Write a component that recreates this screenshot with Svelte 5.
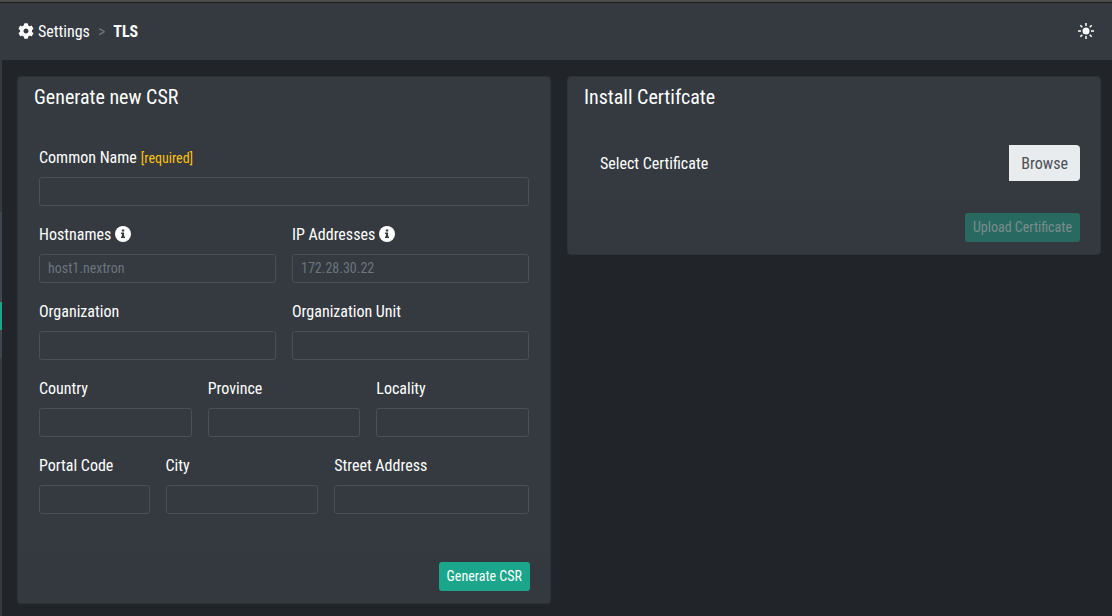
<script>
  const fields = [
    { id: 'common-name', label: 'Common Name', span: 12, required: true },
    { id: 'hostnames', label: 'Hostnames', span: 6, info: true, placeholder: 'host1.nextron' },
    { id: 'ip-addresses', label: 'IP Addresses', span: 6, info: true, placeholder: '172.28.30.22' },
    { id: 'organization', label: 'Organization', span: 6 },
    { id: 'organization-unit', label: 'Organization Unit', span: 6 },
    { id: 'country', label: 'Country', span: 4 },
    { id: 'province', label: 'Province', span: 4 },
    { id: 'locality', label: 'Locality', span: 4 },
    { id: 'postal-code', label: 'Portal Code', span: 3 },
    { id: 'city', label: 'City', span: 4 },
    { id: 'street', label: 'Street Address', span: 5 }
  ];
</script>

<div class="window-edge"></div>
<header>
  <nav>
    <a href="#settings">
      <svg viewBox="0 0 512 512" aria-hidden="true"><path fill="currentColor" d="M487.4 315.7l-42.6-24.600c4.300-23.200 4.300-47 0-70.200l42.600-24.600c4.900-2.800 7.100-8.600 5.500-14-11.100-35.600-30-67.800-54.700-94.600-3.800-4.100-10-5.100-14.800-2.300L380.800 110c-17.900-15.400-38.500-27.300-60.800-35.100V25.800c0-5.600-3.900-10.500-9.400-11.700-36.700-8.200-74.300-7.800-109.200 0-5.500 1.200-9.400 6.100-9.400 11.700V75c-22.200 7.900-42.800 19.800-60.800 35.100L88.700 85.500c-4.900-2.800-11-1.900-14.800 2.300-24.700 26.700-43.600 58.900-54.700 94.600-1.700 5.400.6 11.200 5.500 14L67.300 221c-4.300 23.200-4.300 47 0 70.200l-42.600 24.600c-4.900 2.800-7.100 8.600-5.500 14 11.100 35.600 30 67.800 54.700 94.600 3.800 4.100 10 5.100 14.800 2.300l42.600-24.600c17.900 15.400 38.500 27.300 60.800 35.100v49.200c0 5.600 3.900 10.500 9.400 11.700 36.700 8.200 74.300 7.800 109.200 0 5.500-1.200 9.400-6.100 9.400-11.700v-49.200c22.200-7.900 42.800-19.800 60.800-35.100l42.600 24.600c4.900 2.800 11 1.900 14.800-2.300 24.700-26.700 43.600-58.900 54.700-94.600 1.500-5.500-.7-11.300-5.600-14.100zM256 336c-44.100 0-80-35.900-80-80s35.900-80 80-80 80 35.900 80 80-35.900 80-80 80z"/></svg>
      <span>Settings</span>
    </a>
    <span class="separator">&gt;</span>
    <strong>TLS</strong>
  </nav>
  <button class="theme" type="button" aria-label="Toggle theme">
    <svg viewBox="0 0 16 16" aria-hidden="true">
      <circle cx="8" cy="8" r="3.500" fill="currentColor" />
      <path d="M8 0v3M8 13v3M0 8h3M13 8h3M2.300 2.300l2 2M11.700 11.700l2 2M2.300 13.700l2-2M11.700 4.300l2-2" stroke="currentColor" stroke-width="1.500" fill="none" />
    </svg>
  </button>
</header>

<div class="layout">
  <aside>
    <div class="group">
      <div class="active"></div>
    </div>
  </aside>
  <main>
    <form class="card">
      <h2>Generate new CSR</h2>
      <div class="fields">
        {#each fields as field}
          <div class="field span-{field.span}">
            <label for={field.id}>
              {field.label}
              {#if field.required}<small>[required]</small>{/if}
              {#if field.info}
                <svg viewBox="0 0 16 16" aria-hidden="true">
                  <circle cx="8" cy="8" r="8" fill="#fff" />
                  <path fill="#343a40" d="M6.900 3.400h2.300v2H6.900zM6.100 6.500h3v4h.9v1.500H6v-1.500h.9V8h-.8z" />
                </svg>
              {/if}
            </label>
            <input id={field.id} type="text" placeholder={field.placeholder} />
          </div>
        {/each}
      </div>
      <footer><button class="action" type="button">Generate CSR</button></footer>
    </form>

    <form class="card">
      <h2>Install Certifcate</h2>
      <div class="upload">
        <input id="certificate" type="file" />
        <label for="certificate">
          <span>Select Certificate</span>
          <span class="browse">Browse</span>
        </label>
      </div>
      <footer><button class="action" type="button" disabled>Upload Certificate</button></footer>
    </form>
  </main>
</div>

<style>
  :global(body) {
    background: #212529;
    color: #fff;
    font: 16px/24px "Roboto Condensed", Roboto, sans-serif;
  }
  :global(#app) {
    display: flex;
    flex-direction: column;
    min-height: 100vh;
  }
  * { box-sizing: border-box; }
  button, input { font-family: inherit; }
  .window-edge {
    height: 3px;
    background: #4b4b4b;
    border-bottom: 1px solid #1b1b1b;
  }
  header {
    display: flex;
    align-items: center;
    justify-content: space-between;
    padding: 16px 18px;
    background: #343a40;
    height: 57px;
  }
  nav, nav a { display: flex; align-items: center; }
  nav { gap: 8px; }
  nav a { gap: 4px; color: #fff; text-decoration: none; }
  svg { width: 16px; height: 16px; margin-bottom: 2px; flex: none; display: block; }
  .separator { color: #6c757d; }
  .theme {
    padding: 0;
    border: 0;
    background: none;
    color: #fff;
  }
  .layout { display: flex; flex: 1; }
  aside {
    width: 2px;
    padding-top: 152px;
    background: #343a40;
  }
  .group { padding: 90px 0 28px; background: #3f474e; }
  .active { height: 28px; background: #1ba68b; }
  main {
    flex: 1;
    display: grid;
    grid-template-columns: 1fr 1fr;
    align-items: start;
    gap: 16px;
    padding: 16px 11px 12px 15px;
  }
  .card {
    min-width: 0;
    border: 1px solid #2e3338;
    border-radius: 4px;
    background: #343a40;
    overflow: hidden;
  }
  h2 {
    margin: 0;
    padding: 8px 16px;
    font-size: 20px;
    font-weight: 400;
    line-height: 24px;
  }
  .fields {
    display: grid;
    grid-template-columns: repeat(12, minmax(0, 1fr));
    gap: 17px 16px;
    padding: 29px 21px 36px;
  }
  .span-12 { grid-column: span 12; }
  .span-6 { grid-column: span 6; }
  .span-5 { grid-column: span 5; }
  .span-4 { grid-column: span 4; }
  .span-3 { grid-column: span 3; }
  .field { display: flex; flex-direction: column; gap: 7px; }
  .field label {
    display: flex;
    align-items: center;
    gap: 4px;
    height: 24px;
    white-space: nowrap;
  }
  small { color: #ffc107; font-size: 14px; }
  .field input {
    width: 100%;
    height: 29px;
    padding: 3px 8px 5px;
    border: 1px solid #495057;
    border-radius: 3px;
    background: transparent;
    color: #fff;
    font-size: 14px;
  }
  .field input::placeholder { color: #6c757d; opacity: 1; }
  footer {
    display: flex;
    justify-content: flex-end;
    padding: 12px 20px;
    background: #33393f;
  }
  .action {
    height: 29px;
    padding: 4px 8px;
    border: 0;
    border-radius: 3px;
    background: #1ba68b;
    color: #fff;
    font-size: 14px;
    line-height: 21px;
  }
  .action:disabled { background: #286a61; color: #7c8b8d; }
  .upload { position: relative; padding: 28px 20px 20px; }
  .upload input {
    position: absolute;
    width: 1px;
    height: 1px;
    opacity: 0;
  }
  .upload label {
    display: flex;
    align-items: baseline;
    justify-content: space-between;
    padding-left: 12px;
  }
  .browse {
    padding: 7px 12px 5px;
    border-radius: 0 4px 4px 0;
    background: #e9ecef;
    color: #495057;
  }
  .theme:focus-visible, .action:focus-visible, .upload input:focus-visible + label .browse {
    outline: 2px solid #1ba68b;
    outline-offset: 2px;
  }
</style>
